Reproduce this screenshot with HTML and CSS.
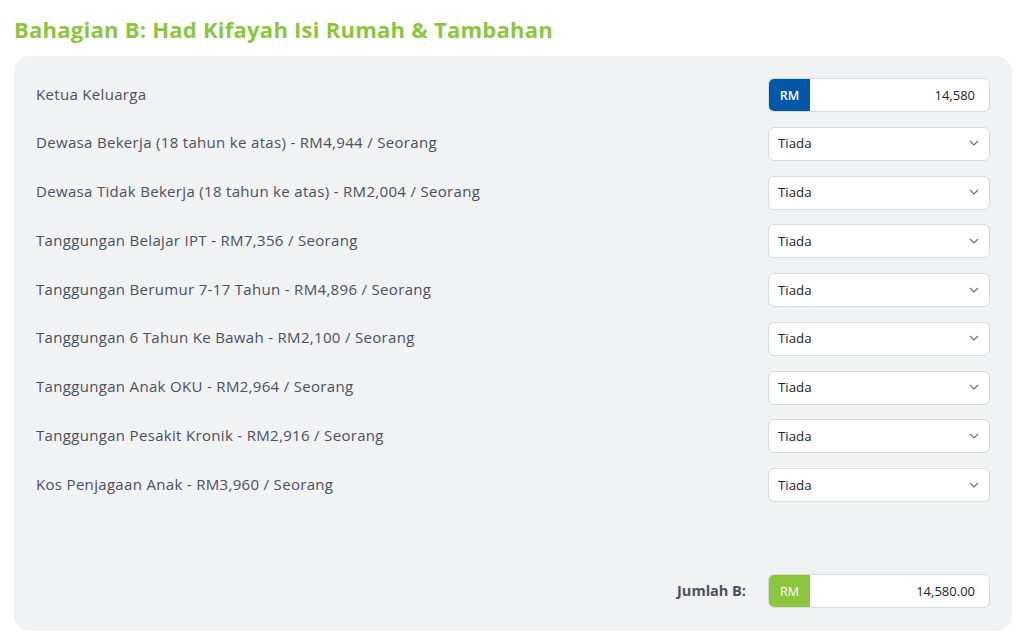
FILE: index.html
```html
<!DOCTYPE html>
<html lang="ms">
<head>
<meta charset="utf-8">
<title>Bahagian B</title>
<link rel="stylesheet" href="styles.css">
</head>
<body>
<div class="page">
  <h2 class="title">Bahagian B: Had Kifayah Isi Rumah &amp; Tambahan</h2>
  <div class="panel">
    <div class="rows">
      <div class="row">
        <span class="label">Ketua Keluarga</span>
        <div class="field">
          <span class="prefix blue">RM</span>
          <span class="value">14,580</span>
        </div>
      </div>
      <div class="row">
        <span class="label">Dewasa Bekerja (18 tahun ke atas) - RM4,944 / Seorang</span>
        <div class="select"><span>Tiada</span><svg class="chev" viewBox="0 0 10 6"><path d="M1 1l4 4 4-4"/></svg></div>
      </div>
      <div class="row">
        <span class="label">Dewasa Tidak Bekerja (18 tahun ke atas) - RM2,004 / Seorang</span>
        <div class="select"><span>Tiada</span><svg class="chev" viewBox="0 0 10 6"><path d="M1 1l4 4 4-4"/></svg></div>
      </div>
      <div class="row">
        <span class="label">Tanggungan Belajar IPT - RM7,356 / Seorang</span>
        <div class="select"><span>Tiada</span><svg class="chev" viewBox="0 0 10 6"><path d="M1 1l4 4 4-4"/></svg></div>
      </div>
      <div class="row">
        <span class="label">Tanggungan Berumur 7-17 Tahun - RM4,896 / Seorang</span>
        <div class="select"><span>Tiada</span><svg class="chev" viewBox="0 0 10 6"><path d="M1 1l4 4 4-4"/></svg></div>
      </div>
      <div class="row">
        <span class="label">Tanggungan 6 Tahun Ke Bawah - RM2,100 / Seorang</span>
        <div class="select"><span>Tiada</span><svg class="chev" viewBox="0 0 10 6"><path d="M1 1l4 4 4-4"/></svg></div>
      </div>
      <div class="row">
        <span class="label">Tanggungan Anak OKU - RM2,964 / Seorang</span>
        <div class="select"><span>Tiada</span><svg class="chev" viewBox="0 0 10 6"><path d="M1 1l4 4 4-4"/></svg></div>
      </div>
      <div class="row">
        <span class="label">Tanggungan Pesakit Kronik - RM2,916 / Seorang</span>
        <div class="select"><span>Tiada</span><svg class="chev" viewBox="0 0 10 6"><path d="M1 1l4 4 4-4"/></svg></div>
      </div>
      <div class="row">
        <span class="label">Kos Penjagaan Anak - RM3,960 / Seorang</span>
        <div class="select"><span>Tiada</span><svg class="chev" viewBox="0 0 10 6"><path d="M1 1l4 4 4-4"/></svg></div>
      </div>
    </div>
    <div class="total">
      <span class="total-label">Jumlah B:</span>
      <div class="field">
        <span class="prefix green">RM</span>
        <span class="value">14,580.00</span>
      </div>
    </div>
  </div>
</div>
</body>
</html>
```
FILE: styles.css
```css
* { box-sizing: border-box; }
html, body { margin: 0; padding: 0; background: #ffffff; }
body { font-family: "Open Sans", "Noto Sans", sans-serif; color: #4b5060; }
.page { padding: 12px 16px 0 14px; }
.title {
  margin: 0;
  height: 44px;
  padding-top: 2px;
  font-size: 22px;
  font-weight: 700;
  color: #8cc540;
  letter-spacing: 0.25px;
  line-height: 30px;
}
.panel {
  background: #f1f2f4;
  border-radius: 16px;
  padding: 22px 22px 23px 22px;
  height: 575px;
  display: flex;
  flex-direction: column;
  justify-content: space-between;
}
.rows { display: flex; flex-direction: column; gap: 14.75px; }
.row {
  display: flex;
  align-items: center;
  justify-content: space-between;
  height: 34px;
}
.label { font-size: 15px; color: #4b5060; letter-spacing: 0.32px; padding-bottom: 3px; }
.field, .select {
  width: 222px;
  height: 34px;
  background: #fff;
  border: 1px solid #d8dadf;
  border-radius: 6px;
  display: flex;
  align-items: center;
  overflow: hidden;
}
.prefix {
  width: 41px;
  height: 100%;
  display: flex;
  align-items: center;
  justify-content: center;
  color: #fff;
  font-size: 12.5px;
  font-weight: 600;
}
.prefix.blue { background: #0058a8; }
.prefix.green { background: #8cc540; font-weight: 500; }
.value { flex: 1; text-align: right; padding-right: 14px; padding-bottom: 1px; font-size: 13px; color: #1f2329; }
.select { justify-content: space-between; padding: 0 10px 1px 9px; font-size: 13.3px; color: #1f2329; }
.chev { width: 10px; height: 6px; fill: none; stroke: #6b6f78; stroke-width: 1.2; }
.total { display: flex; justify-content: flex-end; align-items: center; gap: 22px; }
.total-label { font-size: 14.5px; font-weight: 700; color: #4b5060; padding-bottom: 2px; }
```
